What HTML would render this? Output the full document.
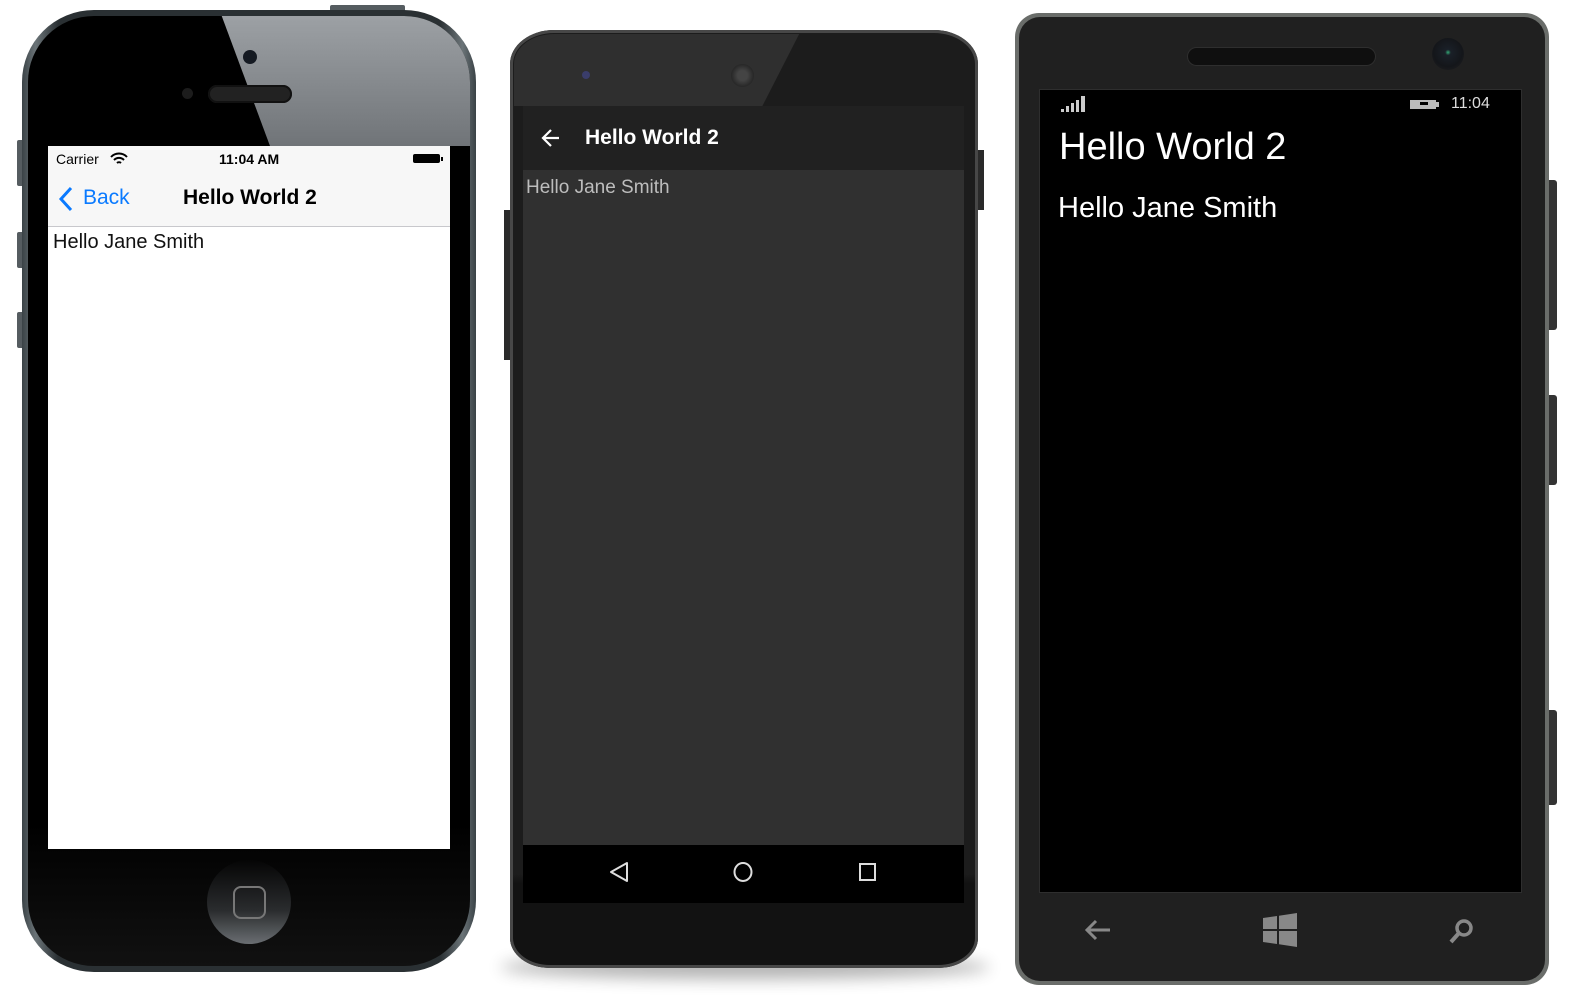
<!DOCTYPE html>
<html><head><meta charset="utf-8"><style>
html,body{margin:0;width:1582px;height:995px;background:#fff;position:relative;overflow:hidden;font-family:"Liberation Sans",sans-serif}
.a{position:absolute}
</style></head><body>
<!-- iPhone -->
<div class="a" style="left:17px;top:140px;width:8px;height:46px;background:#555c60;border-radius:2px"></div>
<div class="a" style="left:17px;top:232px;width:8px;height:36px;background:#555c60;border-radius:2px"></div>
<div class="a" style="left:17px;top:312px;width:8px;height:36px;background:#555c60;border-radius:2px"></div>
<div class="a" style="left:330px;top:5px;width:75px;height:8px;background:#555c60;border-radius:2px"></div>
<div class="a" style="left:22px;top:10px;width:454px;height:962px;border-radius:72px;background:linear-gradient(90deg,#3a4246,#6b7478 3%,#2a3033 8%,#2a3033 92%,#6b7478 97%,#3a4246);"></div>
<div class="a" style="left:28px;top:16px;width:442px;height:950px;border-radius:66px;background:linear-gradient(180deg,#000 85%,#111 100%);overflow:hidden">
 <div class="a" style="left:190px;top:-10px;width:300px;height:140px;background:linear-gradient(180deg,#a0a4a8,#707478);clip-path:polygon(0 0,100% 0,100% 100%,52px 100%)"></div>
</div>
<div class="a" style="left:243px;top:50px;width:14px;height:14px;border-radius:50%;background:#151a22"></div>
<div class="a" style="left:182px;top:88px;width:11px;height:11px;border-radius:50%;background:#1c1c1c"></div>
<div class="a" style="left:208px;top:85px;width:84px;height:18px;border-radius:9px;background:#222;box-shadow:inset 0 0 0 2px #111"></div>
<div class="a" style="left:48px;top:146px;width:402px;height:703px;background:#fff"></div>
<div class="a" style="left:48px;top:146px;width:402px;height:80px;background:#f7f7f7;border-bottom:1px solid #c8c8cc"></div>
<div class="a" style="left:56px;top:151px;font-size:14px;color:#000">Carrier</div>
<svg class="a" style="left:110px;top:152px" width="18" height="14" viewBox="0 0 18 14"><path d="M1 5a11 11 0 0 1 16 0M4 8a7 7 0 0 1 10 0M7 11a3 3 0 0 1 4 0" stroke="#000" stroke-width="2" fill="none"/></svg>
<div class="a" style="left:219px;top:151px;font-size:14px;font-weight:bold;color:#000">11:04 AM</div>
<div class="a" style="left:413px;top:154px;width:27px;height:9px;background:#000;border-radius:2px"></div>
<div class="a" style="left:441px;top:157px;width:2px;height:4px;background:#000"></div>
<svg class="a" style="left:58px;top:186px" width="16" height="26" viewBox="0 0 16 26"><path d="M13 2 3 13l10 11" stroke="#0a7aff" stroke-width="3" fill="none"/></svg>
<div class="a" style="left:83px;top:186px;font-size:21px;color:#0a7aff">Back</div>
<div class="a" style="left:183px;top:186px;font-size:21px;font-weight:bold;color:#000">Hello World 2</div>
<div class="a" style="left:53px;top:231px;font-size:20px;color:#111">Hello Jane Smith</div>
<div class="a" style="left:207px;top:860px;width:84px;height:84px;border-radius:50%;background:linear-gradient(180deg,#050505,#2a2c2e 60%,#6a6e72)"></div>
<div class="a" style="left:233px;top:886px;width:29px;height:29px;border:2px solid #777;border-radius:8px"></div>
<!-- Android -->
<div class="a" style="left:504px;top:210px;width:8px;height:150px;background:#2a2a2a"></div>
<div class="a" style="left:976px;top:150px;width:8px;height:60px;background:#2a2a2a"></div>
<div class="a" style="left:500px;top:955px;width:490px;height:24px;border-radius:50%;background:#000;opacity:.3;filter:blur(8px)"></div>
<div class="a" style="left:510px;top:30px;width:468px;height:938px;border-radius:44px 44px 40px 40px/34px 34px 30px 30px;background:linear-gradient(180deg,#1c1c1c 90%,#121212 91%);box-shadow:inset 0 0 0 3px #474747"></div>
<div class="a" style="left:514px;top:34px;width:460px;height:72px;border-radius:40px 40px 0 0/30px 30px 0 0;background:#2f2f2f;clip-path:polygon(0 0,62% 0,54% 100%,0 100%)"></div>
<div class="a" style="left:582px;top:71px;width:8px;height:8px;border-radius:50%;background:#3a3d6a"></div>
<div class="a" style="left:731px;top:64px;width:23px;height:23px;border-radius:50%;background:radial-gradient(#444 30%,#111)"></div>
<div class="a" style="left:523px;top:106px;width:441px;height:739px;background:#303030"></div>
<div class="a" style="left:523px;top:106px;width:441px;height:64px;background:#212121"></div>
<svg class="a" style="left:540px;top:127px" width="22" height="22" viewBox="0 0 22 22"><path d="M19 11H4M11 3 3 11l8 8" stroke="#fff" stroke-width="2.2" fill="none"/></svg>
<div class="a" style="left:585px;top:126px;font-size:21px;font-weight:bold;color:#fff">Hello World 2</div>
<div class="a" style="left:526px;top:177px;font-size:19px;color:#bdbdbd">Hello Jane Smith</div>
<div class="a" style="left:523px;top:845px;width:441px;height:58px;background:#000"></div>
<svg class="a" style="left:600px;top:858px" width="290" height="30" viewBox="0 0 290 30"><path d="M27 5 11 14l16 9z" stroke="#ddd" stroke-width="2" fill="none" stroke-linejoin="round"/><ellipse cx="143" cy="14" rx="8.5" ry="9" stroke="#ddd" stroke-width="2" fill="none"/><rect x="260" y="6" width="15" height="16" stroke="#ddd" stroke-width="2" fill="none"/></svg>
<!-- Windows -->
<div class="a" style="left:1549px;top:180px;width:8px;height:150px;background:#333;border-radius:0 3px 3px 0"></div>
<div class="a" style="left:1549px;top:395px;width:8px;height:90px;background:#333;border-radius:0 3px 3px 0"></div>
<div class="a" style="left:1549px;top:710px;width:8px;height:95px;background:#333;border-radius:0 3px 3px 0"></div>
<div class="a" style="left:1015px;top:13px;width:534px;height:972px;border-radius:24px;background:#6a6d6a"></div>
<div class="a" style="left:1019px;top:17px;width:526px;height:964px;border-radius:21px;background:#202020"></div>
<div class="a" style="left:1188px;top:48px;width:187px;height:17px;border-radius:9px;background:#0f0f0f;box-shadow:0 0 0 1px #2e2e2e"></div>
<div class="a" style="left:1432px;top:38px;width:32px;height:32px;border-radius:50%;background:radial-gradient(circle at 50% 45%,#3a7 0,#1a2028 12%,#14161a 60%,#222)"></div>
<div class="a" style="left:1040px;top:90px;width:481px;height:802px;background:#000;box-shadow:0 0 0 1px #2e2e2e"></div>
<svg class="a" style="left:1061px;top:96px" width="28" height="16" viewBox="0 0 28 16"><rect x="0" y="13" width="3" height="3" fill="#ccc"/><rect x="5" y="10" width="3" height="6" fill="#ccc"/><rect x="10" y="7" width="3" height="9" fill="#ccc"/><rect x="15" y="4" width="3" height="12" fill="#ccc"/><rect x="20" y="0" width="4" height="16" fill="#ccc"/></svg>
<svg class="a" style="left:1409px;top:97px" width="32" height="14" viewBox="0 0 32 14"><rect x="1" y="3" width="26" height="9" fill="#bbb"/><rect x="27" y="5" width="3" height="5" fill="#bbb"/><path d="M11 5h8v3h-8z" fill="#000"/></svg>
<div class="a" style="left:1451px;top:95px;font-size:16px;color:#ddd">11:04</div>
<div class="a" style="left:1059px;top:126px;font-size:38px;color:#fff">Hello World 2</div>
<div class="a" style="left:1058px;top:192px;font-size:29px;color:#fff">Hello Jane Smith</div>
<svg class="a" style="left:1084px;top:918px" width="28" height="24" viewBox="0 0 28 24"><path d="M26 12H4M12 3 3 12l9 9" stroke="#888" stroke-width="3" fill="none"/></svg>
<svg class="a" style="left:1263px;top:913px" width="34" height="34" viewBox="0 0 34 34"><path d="M0 5l14-2v13H0zM16 2.7 34 0v16H16zM0 18h14v13L0 29zM16 18h18v16l-18-2.7z" fill="#888"/></svg>
<svg class="a" style="left:1447px;top:918px" width="28" height="26" viewBox="0 0 28 26"><circle cx="17" cy="10" r="7" stroke="#888" stroke-width="3.5" fill="none"/><path d="M12 15 4 24" stroke="#888" stroke-width="4"/></svg>
</body></html>
